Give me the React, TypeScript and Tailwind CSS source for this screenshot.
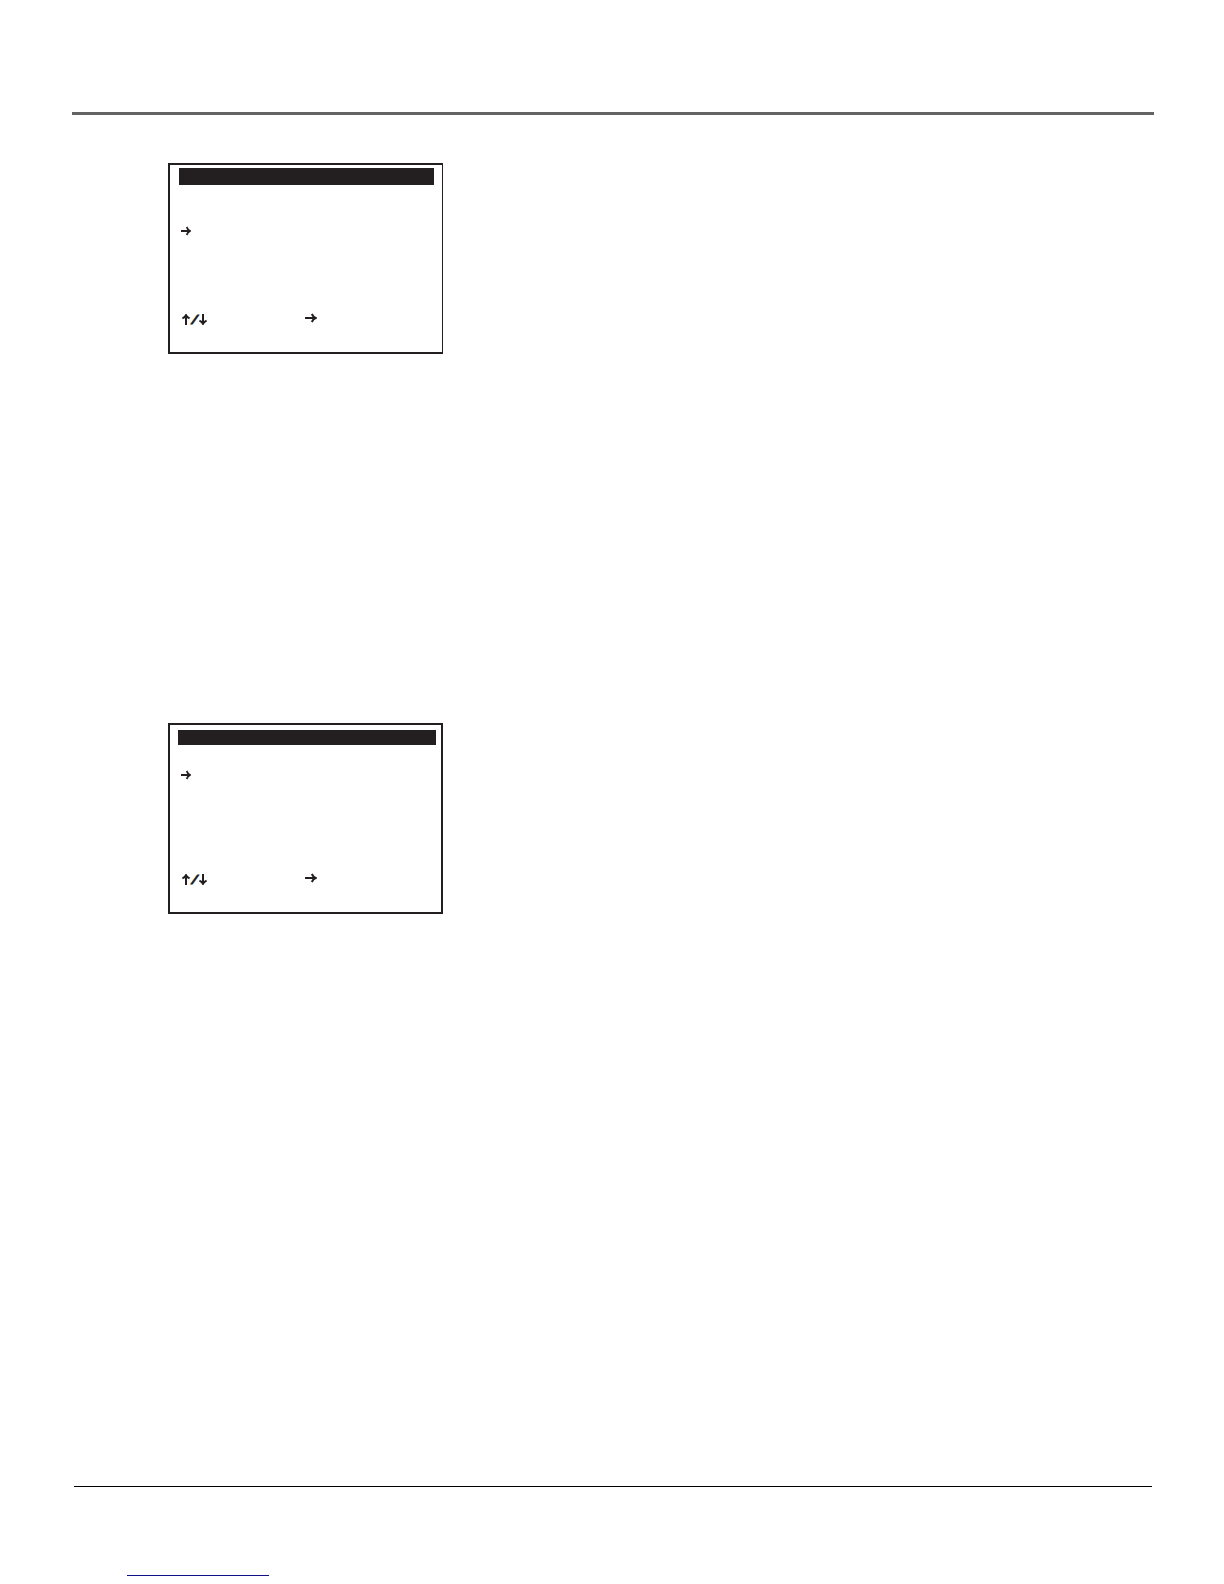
const INK = '#231f20';

function RightArrow({ className }: { className: string }) {
  return (
    <svg viewBox="0 0 12 10" className={className} fill="none" stroke={INK} strokeWidth="2" preserveAspectRatio="none" aria-hidden="true">
      <path d="M0 5H10.5M6.8 1C7.6 2.8 8.8 4.2 10.6 5C8.8 5.8 7.6 7.2 6.8 9" />
    </svg>
  );
}

function UpArrow({ className }: { className: string }) {
  return (
    <svg viewBox="0 0 8 11" className={className} fill="none" stroke={INK} strokeWidth="2" aria-hidden="true">
      <path d="M4 11V1.2M0.4 4.4C2.2 3.6 3.4 2.6 4 1.2C4.6 2.6 5.8 3.6 7.6 4.4" />
    </svg>
  );
}

function KeyHints() {
  return (
    <div className="flex h-[12px] items-center pl-[12px]">
      <UpArrow className="h-[11px] w-[8px]" />
      <span className="flex w-[9px] justify-center pt-[3px] font-['Liberation_Mono',monospace] text-[12px] leading-[14px] font-bold text-[#231f20] italic [-webkit-text-stroke:1px_#231f20]">/</span>
      <UpArrow className="h-[11px] w-[8px] rotate-180" />
      <RightArrow className="ml-[98px] h-[10px] w-[12px] self-start" />
    </div>
  );
}

export default function App() {
  return (
    <div className="flex min-h-screen flex-col bg-white pt-[112px] pb-[8px] font-['Liberation_Sans',sans-serif]">
      <header className="mr-[70px] ml-[72px] h-[3px] bg-[#636363]" />
      <main className="grow pl-[168px]">
        <figure className="mt-[48px] flex h-[191px] w-[275px] flex-col border-2 border-r border-[#231f20] pb-[27px]">
          <div className="mt-[3px] mr-[8px] ml-[9px] h-[17px] bg-[#231f20]" />
          <RightArrow className="mt-[41px] ml-[11px] h-[10px] w-[10px]" />
          <div className="mt-auto">
            <KeyHints />
          </div>
        </figure>
        <figure className="mt-[369px] flex h-[191px] w-[275px] flex-col border-2 border-[#231f20] pb-[27px]">
          <div className="mt-[5px] mr-[5px] ml-[8px] h-[15px] bg-[#231f20]" />
          <RightArrow className="mt-[25px] ml-[11px] h-[10px] w-[10px]" />
          <div className="mt-auto">
            <KeyHints />
          </div>
        </figure>
      </main>
      <footer>
        <div className="mr-[72px] ml-[74px] h-px bg-black" />
        <div className="mt-[88px] ml-[127px] h-px w-[142px] bg-[#11118a]" />
      </footer>
    </div>
  );
}
